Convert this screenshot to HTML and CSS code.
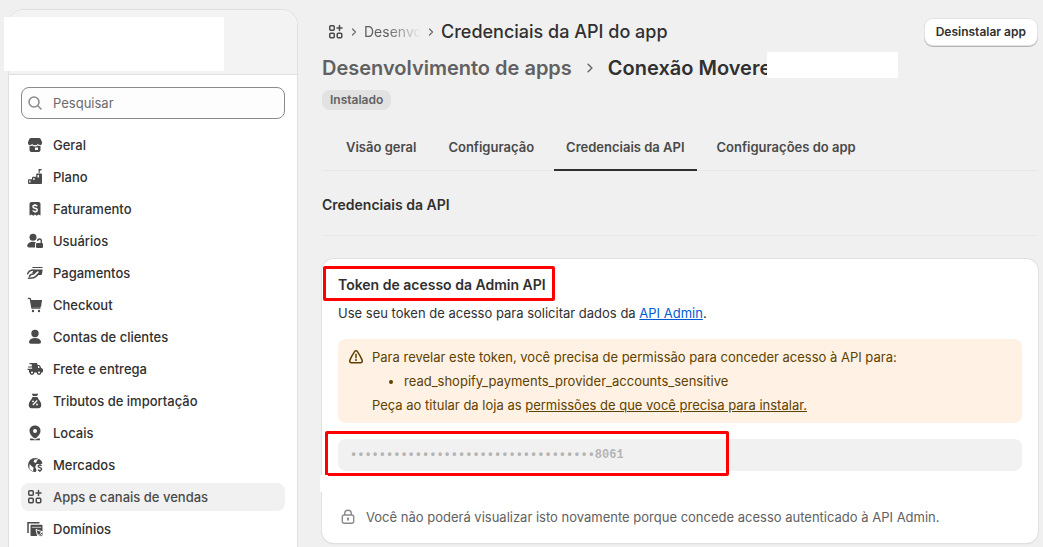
FILE: index.html
```html
<!DOCTYPE html>
<html lang="pt-BR">
<head>
<meta charset="utf-8">
<meta name="viewport" content="width=device-width, initial-scale=1">
<title>Credenciais da API do app</title>
<link rel="stylesheet" href="styles.css">
</head>
<body>
<svg class="sprite" aria-hidden="true">
  <symbol id="apps" viewBox="0 0 16 16"><g fill="none" stroke="currentColor" stroke-width="1.5"><rect x="1.75" y="1.75" width="4.5" height="4.5" rx="1"/><rect x="1.75" y="9.25" width="4.5" height="4.5" rx="1"/><rect x="9.25" y="9.25" width="4.5" height="4.5" rx="1"/><path d="M11.500 1.500v5M9 4h5" stroke-linecap="round"/></g></symbol>
  <symbol id="chevron" viewBox="0 0 8 12"><path d="M2.500 3 5.500 6 2.500 9" fill="none" stroke="currentColor" stroke-width="1.300" stroke-linecap="round" stroke-linejoin="round"/></symbol>
</svg>
<div class="layout">
  <aside class="sidebar">
    <div class="store"><div class="store-mask"></div></div>
    <div class="sidebar-body">
      <label class="search">
        <svg class="icon" viewBox="0 0 16 16" aria-hidden="true"><g fill="none" stroke="currentColor" stroke-width="1.5" stroke-linecap="round"><circle cx="7" cy="7" r="5"/><path d="m10.700 10.700 3.300 3.300"/></g></svg>
        <input class="search-input" type="search" placeholder="Pesquisar" aria-label="Pesquisar">
      </label>
      <nav class="nav" aria-label="Configurações">
        <a class="nav-item" href="#"><svg class="icon" viewBox="0 0 16 16"><path fill="currentColor" d="M4 1h8c.8 0 1.300.4 1.600 1L15 5v1.300A2.300 2.300 0 0 1 10.800 7.500 3 3 0 0 1 8 8a3 3 0 0 1-2.800-.5A2.300 2.300 0 0 1 1 6.300V5l1.400-3c.3-.6.8-1 1.600-1z"/><path d="M2.500 8.500c1 .1 1.900-.2 2.700-1 .8.900 1.700 1.300 2.800 1.300s2-.4 2.800-1.300c.8.800 1.700 1.100 2.700 1" fill="none" stroke="#fff" stroke-width=".9"/><path fill="currentColor" fill-rule="evenodd" d="M2.500 9c1.200.2 2 0 2.700-.6 1.600 1.300 4 1.300 5.600 0 .7.600 1.500.8 2.700.6v4c0 1.200-.8 2-2 2h-7c-1.200 0-2-.8-2-2zM8 10.500V13h3v-2.500z"/></svg>Geral</a>
        <a class="nav-item" href="#"><svg class="icon" viewBox="0 0 16 16"><path fill="currentColor" fill-rule="evenodd" d="M1 11.500c0-.8.500-1.300 1.300-1.300H5V9c0-.8.500-1.300 1.300-1.300h2.900V5.800c0-.8.500-1.300 1.300-1.300h3.200c.8 0 1.300.5 1.300 1.300v7.700c0 1-.5 1.500-1.500 1.500h-11C1.500 15 1 14.500 1 13.500zM2.200 11.500v2h1.300v-2zM6.300 9v2h1.300V9zM10.500 6v2.500h1.500V6z"/><path fill="currentColor" d="M11.500 0H14l1-.3-.7 1.500-1.600.5V4h-1z"/></svg>Plano</a>
        <a class="nav-item" href="#"><svg class="icon" viewBox="0 0 16 16"><path fill="currentColor" d="M4.500 1h7c1.200 0 2 .8 2 2v11.500l-2-1-1.800 1.200L8 13.500l-1.700 1.200-1.800-1.200-2 1V3c0-1.200.8-2 2-2z"/><path d="M10.300 5.200C9.700 4.500 9 4.300 8 4.300c-1.300 0-2.100.6-2.100 1.500 0 2.200 4.400.8 4.400 3.100 0 1-.9 1.600-2.200 1.600-1.100 0-1.900-.4-2.500-1.100M8 2.900v1.300M8 10.500v1.300" fill="none" stroke="#fff" stroke-width="1.400"/></svg>Faturamento</a>
        <a class="nav-item" href="#"><svg class="icon" viewBox="0 0 16 16"><circle cx="6" cy="4.300" r="3.500" fill="currentColor"/><path fill="currentColor" d="M.3 13c0-2.500 2.500-4.200 5.700-4.200 1.100 0 2.100.2 3 .6-.7.500-1 1.100-1 2v3H2c-1 0-1.700-.5-1.700-1.400z"/><rect x="9" y="10" width="7" height="5" rx="1.200" fill="currentColor"/><path d="M10.700 8v-.2a1.800 1.800 0 0 1 3.600 0V10" fill="none" stroke="currentColor" stroke-width="1.400"/></svg>Usuários</a>
        <a class="nav-item" href="#"><svg class="icon" viewBox="0 0 16 16"><path fill="currentColor" d="M6.500 2h8c.8 0 1.200.4 1.200 1H4.900C5.300 2.400 5.800 2 6.500 2z"/><path fill="currentColor" d="M7 4.500h8.700L15 9c-.1.700-.6 1-1.300 1H9.300l2.200-2.400c.7-.8-.2-1.800-1.100-1.200L7.500 8.300 5 8.200z"/><path d="M.7 8.700C2 5.700 3.500 5 6.500 5M1.500 13.300l3.300-.2c3.300-.2 4.200-1.900 6.200-3.600M2.500 11.200C3 9.500 4.500 9.200 6.500 9L8.500 7" fill="none" stroke="currentColor" stroke-width="1.500" stroke-linecap="round"/></svg>Pagamentos</a>
        <a class="nav-item" href="#"><svg class="icon" viewBox="0 0 16 16"><path d="M.8 1.400h1.700c.5 0 .8.3.9.800L5 11h8.500" fill="none" stroke="currentColor" stroke-width="1.400"/><path fill="currentColor" d="M3.500 3H15l-.8 6c-.1.700-.6 1.200-1.400 1.200H4.800z"/><circle cx="6" cy="14" r="1.200" fill="currentColor"/><circle cx="12" cy="14" r="1.200" fill="currentColor"/></svg>Checkout</a>
        <a class="nav-item" href="#"><svg class="icon" viewBox="0 0 16 16"><circle cx="8" cy="4.500" r="3.700" fill="currentColor"/><path fill="currentColor" d="M2 12.800C2.300 10.500 4.700 9 8 9s5.700 1.500 6 3.800c.1 1.200-.7 2-1.800 2H3.800c-1.100 0-1.900-.8-1.800-2z"/></svg>Contas de clientes</a>
        <a class="nav-item" href="#"><svg class="icon" viewBox="0 0 16 16"><path fill="currentColor" d="M2.500 2H9c1 0 1.500.5 1.500 1.300V4h1.200c.8 0 1.300.3 1.600 1l.9 1.900 1 .5c.5.300.8.7.8 1.300V10c0 1-.5 1.600-1.500 1.600H2V9H.5V7.800h4.600V6.600h-4V5.400h3.700V3.200H2.500z"/><path fill="#fff" d="M11 5h.8l.9 2H11z"/><circle cx="5" cy="11.500" r="1.700" fill="#fff" stroke="currentColor" stroke-width="1.400"/><circle cx="12" cy="11.500" r="1.700" fill="#fff" stroke="currentColor" stroke-width="1.400"/></svg>Frete e entrega</a>
        <a class="nav-item" href="#"><svg class="icon" viewBox="0 0 16 16"><path fill="currentColor" d="M5 1.300C5 .6 5.500.3 6 .5l1 .4L8 .4l1 .5 1-.4c.5-.2 1 .1 1 .8L10 3H6zM5.500 4h5c.3 1.200 1.100 2.100 1.900 3.200 1.100 1.500 2.100 3.300 1.800 5.300-.2 1.700-1.200 2.800-2.700 2.800h-7c-1.500 0-2.500-1.100-2.700-2.800-.3-2 .7-3.800 1.800-5.300C4.400 6.100 5.200 5.200 5.500 4z"/><path d="m5.800 12 4.400-4.500" stroke="#fff" stroke-width="1.200"/><circle cx="6" cy="8.300" r=".9" fill="#fff"/><circle cx="10" cy="11.500" r=".9" fill="#fff"/></svg>Tributos de importação</a>
        <a class="nav-item" href="#"><svg class="icon" viewBox="0 0 16 16"><path fill="currentColor" fill-rule="evenodd" d="M8 .5c3.200 0 5.500 2.200 5.500 5.200 0 2.600-1.700 5.300-4.100 7.100-.9.700-1.900.7-2.800 0-2.400-1.800-4.100-4.500-4.100-7.100C2.500 2.700 4.800.5 8 .5zM8 4a2 2 0 1 0 0 4 2 2 0 0 0 0-4z"/><path fill="currentColor" d="M3 13.500h2.500L8 14.700l2.500-1.200H13v1.700H3z"/></svg>Locais</a>
        <a class="nav-item" href="#"><svg class="icon" viewBox="0 0 16 16"><circle cx="8" cy="8" r="7" fill="currentColor"/><path fill="#fff" d="M2.500 7 5 9.500l1.500 1-.5 4L2.500 12zM7.500 2.500 6.500 5 9 6l1-2.500 1.500-1.300zM9.500 7H16v9H8.500l1-3-1.300-3z"/><path d="M14.500 8.800c-.4-.5-1-.7-1.700-.7-1 0-1.700.5-1.700 1.200 0 1.700 3.600.9 3.600 2.800 0 .8-.8 1.400-1.800 1.400-.9 0-1.500-.3-1.900-.9M12.900 6.700V8M12.900 13.500V15" fill="none" stroke="currentColor" stroke-width="1.300"/><path d="M12 2.500c1.700 1 2.600 2.300 2.900 4" fill="none" stroke="currentColor" stroke-width="1.300"/></svg>Mercados</a>
        <a class="nav-item is-current" href="#" aria-current="page"><svg class="icon"><use href="#apps"/></svg>Apps e canais de vendas</a>
        <a class="nav-item" href="#"><svg class="icon" viewBox="0 0 16 16"><path d="M1 12V1.700h11.500" fill="none" stroke="currentColor" stroke-width="1.500"/><path fill="currentColor" d="M4.500 3.700h10c.7 0 1 .4 1 1v9.300c0 .7-.3 1-1 1h-10c-.7 0-1-.3-1-1V4.700c0-.6.3-1 1-1z"/><path d="M4.800 6.300h9.500" stroke="#fff" stroke-width="1" opacity=".7"/><path fill="currentColor" stroke="#fff" d="m9 8.500 6.700 2.400-2.600 1.300 2.200 2.300-1.200 1.200-2.200-2.300-1.100 2.300z"/></svg>Domínios</a>
      </nav>
    </div>
  </aside>
  <main class="main">
    <header class="topbar">
      <nav class="crumbs" aria-label="Trilha">
        <svg class="icon"><use href="#apps"/></svg>
        <svg class="chevron"><use href="#chevron"/></svg>
        <a class="crumb-link" href="#">Desenvo</a>
        <svg class="chevron"><use href="#chevron"/></svg>
        <h1 class="page-title">Credenciais da API do app</h1>
      </nav>
      <button class="button" type="button">Desinstalar app</button>
    </header>
    <div class="app-title">
      <a class="app-parent" href="#">Desenvolvimento de apps</a>
      <svg class="chevron chevron-large"><use href="#chevron"/></svg>
      <h2 class="app-name">Conexão Movere<span class="name-mask"></span></h2>
    </div>
    <span class="badge">Instalado</span>
    <div class="tabs" role="tablist">
      <button class="tab" type="button" role="tab" aria-selected="false">Visão geral</button>
      <button class="tab" type="button" role="tab" aria-selected="false">Configuração</button>
      <button class="tab" type="button" role="tab" aria-selected="true">Credenciais da API</button>
      <button class="tab" type="button" role="tab" aria-selected="false">Configurações do app</button>
    </div>
    <h2 class="section-title">Credenciais da API</h2>
    <section class="card">
      <h3 class="card-title">Token de acesso da Admin API</h3>
      <p class="card-text">Use seu token de acesso para solicitar dados da <a class="link" href="#">API Admin</a>.</p>
      <div class="banner">
        <svg class="icon" viewBox="0 0 16 16" aria-hidden="true"><path d="M6.700 2.400c.6-1 2-1 2.600 0 1.900 2.800 3.700 6 4.900 9 .4 1.200-.4 2.300-1.600 2.300H3.400c-1.200 0-2-1.100-1.600-2.300 1.200-3 3-6.200 4.900-9zM8 5.300v3.400" fill="none" stroke="currentColor" stroke-width="1.500" stroke-linecap="round"/><circle cx="8" cy="11" r="1" fill="currentColor"/></svg>
        <div class="banner-text">
          <p>Para revelar este token, você precisa de permissão para conceder acesso à API para:</p>
          <ul><li>read_shopify_payments_provider_accounts_sensitive</li></ul>
          <p>Peça ao titular da loja as <a href="#">permissões de que você precisa para instalar.</a></p>
        </div>
      </div>
      <div class="token">
        <input class="token-input" type="text" value="••••••••••••••••••••••••••••••••••8061" aria-label="Token de acesso da Admin API" disabled>
        <span class="token-mark"></span>
      </div>
      <p class="note"><svg class="icon" viewBox="0 0 16 16" aria-hidden="true"><g fill="none" stroke="currentColor" stroke-width="1.400"><rect x="2.300" y="6" width="11.400" height="8.300" rx="2"/><path d="M4.700 6V4.600a3.300 3.300 0 0 1 6.600 0V6"/></g><circle cx="8" cy="9.800" r="1.200" fill="currentColor"/><path d="M8 10v2" stroke="currentColor"/></svg>Você não poderá visualizar isto novamente porque concede acesso autenticado à API Admin.</p>
      <span class="title-mark"></span>
      <span class="edge-mask"></span>
    </section>
  </main>
</div>
</body>
</html>
```
FILE: styles.css
```css
* { box-sizing: border-box; }
body {
  margin: 0;
  background: #f0f0f0;
  color: #303030;
  font: 400 13px/20px Inter, "Liberation Sans", sans-serif;
}
h1, h2, h3, p, ul { margin: 0; }
button, input { font: inherit; color: inherit; }
.sprite { display: none; }
.icon { flex: none; width: 16px; height: 16px; }

.layout {
  display: grid;
  grid-template-columns: 290px minmax(0, 1fr);
  gap: 24px;
  min-height: 100vh;
  padding: 9px 5px 0 8px;
}

.sidebar {
  border: 1px solid #e0e0e0;
  border-bottom: 0;
  border-radius: 16px 16px 0 0;
  background: #fff;
}
.store {
  position: relative;
  height: 65px;
  border-bottom: 1px solid #e0e0e0;
  border-radius: 15px 15px 0 0;
  background: #f3f3f3;
}
.store-mask {
  position: absolute;
  top: 7px;
  left: -5px;
  width: 220px;
  height: 54px;
  background: #fff;
}
.sidebar-body { padding: 12px 12px 0; }
.search {
  display: flex;
  align-items: center;
  gap: 10px;
  height: 32px;
  padding: 0 5px;
  border: 1px solid #8a8a8a;
  border-radius: 8px;
  background: #fdfdfd;
  color: #8a8a8a;
}
.search-input {
  flex: 1;
  min-width: 0;
  padding: 0;
  border: 0;
  outline: 0;
  background: none;
  color: #303030;
}
.search-input::placeholder { color: #6b6b6b; opacity: 1; }
.nav {
  display: flex;
  flex-direction: column;
  gap: 4px;
  padding-top: 12px;
}
.nav-item {
  display: flex;
  align-items: center;
  gap: 10px;
  height: 28px;
  padding: 0 6px;
  border-radius: 8px;
  color: #303030;
  font-weight: 550;
  text-decoration: none;
}
.nav-item .icon { color: #4a4a4a; }
.nav-item.is-current { background: #f1f1f1; color: #4a4a4a; }

.main { padding-bottom: 4px; }
.topbar {
  display: flex;
  align-items: center;
  justify-content: space-between;
  height: 45px;
  padding-right: 1px;
}
.crumbs {
  display: flex;
  align-items: center;
  gap: 6px;
  padding-left: 6px;
  color: #4a4a4a;
}
.chevron { flex: none; width: 8px; height: 12px; color: #6f6f6f; }
.crumb-link {
  width: 57px;
  color: #616161;
  font-size: 14px;
  text-decoration: none;
  white-space: nowrap;
  -webkit-mask-image: linear-gradient(90deg, #000 40%, transparent 100%);
  mask-image: linear-gradient(90deg, #000 40%, transparent 100%);
}
.page-title { color: #303030; font-size: 18px; font-weight: 550; line-height: 24px; }
.button {
  height: 26px;
  padding: 0 11px;
  border: 0;
  border-radius: 8px;
  background: #fff;
  box-shadow: 0 0 0 1px #e3e3e3, 0 1px 0 1px #b5b5b5;
  font-size: 12px;
  font-weight: 600;
}
.app-title {
  display: flex;
  align-items: center;
  height: 28px;
  font-size: 20px;
  line-height: 28px;
}
.app-parent { color: #616161; font-weight: 600; text-decoration: none; }
.chevron-large { width: 10px; height: 16px; margin: 0 13px; }
.app-name { position: relative; font-size: 20px; font-weight: 600; }
.name-mask {
  position: absolute;
  top: -2px;
  left: 159px;
  width: 131px;
  height: 26px;
  background: #fff;
}
.badge {
  display: block;
  width: fit-content;
  margin-top: 8px;
  padding: 0 8px;
  border-radius: 8px;
  background: #e2e2e2;
  color: #616161;
  font-size: 12px;
  font-weight: 600;
}
.tabs {
  display: flex;
  gap: 8px;
  margin-top: 14px;
  padding: 0 12px;
  border-bottom: 1px solid #e7e7e7;
}
.tab {
  height: 47px;
  margin-bottom: -1px;
  padding: 0 12px;
  border: 0;
  border-bottom: 2px solid transparent;
  background: none;
  color: #4a4a4a;
  font-weight: 600;
}
.tab[aria-selected="true"] { border-bottom-color: #303030; }
.section-title {
  padding: 24px 0 20px;
  border-bottom: 1px solid #e7e7e7;
  font-size: 14px;
  font-weight: 600;
}
.card {
  position: relative;
  margin-top: 23px;
  padding: 16px;
  border-radius: 12px;
  background: #fff;
  box-shadow: 0 0 0 1px #e1e1e1, 0 1px 1px #c4c4c4;
}
.card-title { font-size: 14px; font-weight: 600; }
.card-text { margin-top: 8px; }
.link { color: #005bd3; }
.banner {
  display: flex;
  gap: 8px;
  margin-top: 16px;
  padding: 6px 10px;
  border-radius: 8px;
  background: #fff1e3;
  color: #5e4200;
}
.banner .icon { margin-top: 4px; }
.banner-text { line-height: 24px; }
.banner-text ul { padding-left: 32px; }
.banner-text a { color: inherit; }
.token { position: relative; margin-top: 16px; }
.token-input {
  display: block;
  width: 100%;
  height: 32px;
  padding: 0 12px;
  border: 0;
  border-radius: 8px;
  background: #f1f1f1;
  color: #b5b5b5;
  font: bold 12px/20px "Liberation Mono", monospace;
}
.token-mark,
.title-mark {
  position: absolute;
  border: 3px solid #f00;
  border-radius: 2px;
  pointer-events: none;
}
.token-mark { top: -8px; left: -13px; width: 404px; height: 45px; }
.title-mark { top: 7px; left: 1px; width: 232px; height: 35px; }
.edge-mask {
  position: absolute;
  top: 216px;
  left: -2px;
  width: 8px;
  height: 17px;
  background: #fff;
}
.note {
  display: flex;
  align-items: center;
  gap: 10px;
  margin-top: 36px;
  padding-left: 2px;
  color: #616161;
}
.note .icon { color: #8a8a8a; }
```
